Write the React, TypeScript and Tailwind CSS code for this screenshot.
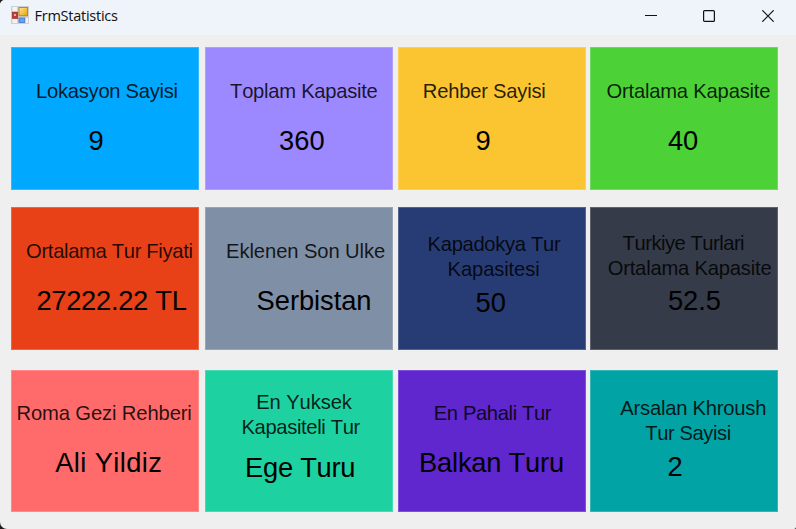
type Line = { text: string; cls: string };
type Stat = { card: string; lines: Line[]; value: Line };

const rows: { cls: string; stats: Stat[] }[] = [
  {
    cls: "mt-3 h-[143px]",
    stats: [
      {
        card: "bg-[#00a8ff] pt-[32px]",
        lines: [{ text: "Lokasyon Sayisi", cls: "ml-[24.5px] tracking-[-0.28px]" }],
        value: { text: "9", cls: "mt-[22px] ml-[77px]" },
      },
      {
        card: "ml-[6px] bg-[#9c88ff] pt-[32px]",
        lines: [{ text: "Toplam Kapasite", cls: "ml-[24.5px] tracking-[-0.27px]" }],
        value: { text: "360", cls: "mt-[22px] ml-[73.5px]" },
      },
      {
        card: "ml-[4.5px] bg-[#fbc531] pt-[32px]",
        lines: [{ text: "Rehber Sayisi", cls: "ml-[24.7px] tracking-[-0.22px]" }],
        value: { text: "9", cls: "mt-[22px] ml-[77.3px]" },
      },
      {
        card: "ml-[4.5px] bg-[#4cd137] pt-[32px]",
        lines: [{ text: "Ortalama Kapasite", cls: "ml-[15.9px] tracking-[-0.2px]" }],
        value: { text: "40", cls: "mt-[22px] ml-[77.3px]" },
      },
    ],
  },
  {
    cls: "mt-[17px] h-[143px]",
    stats: [
      {
        card: "bg-[#e84118] pt-[32px]",
        lines: [{ text: "Ortalama Tur Fiyati", cls: "ml-[14.5px] tracking-[-0.33px]" }],
        value: { text: "27222.22 TL", cls: "mt-[22px] ml-[24.8px] tracking-[-0.28px]" },
      },
      {
        card: "ml-[6px] bg-[#7f8fa6] pt-[32px]",
        lines: [{ text: "Eklenen Son Ulke", cls: "ml-[20.5px] tracking-[-0.09px]" }],
        value: { text: "Serbistan", cls: "mt-[22px] ml-[51px] tracking-[-0.05px]" },
      },
      {
        card: "ml-[4.5px] bg-[#273c75] pt-[25px]",
        lines: [
          { text: "Kapadokya Tur", cls: "ml-[29.5px] tracking-[-0.32px]" },
          { text: "Kapasitesi", cls: "ml-[49.5px] tracking-[-0.12px]" },
        ],
        value: { text: "50", cls: "mt-[6px] ml-[77.5px]" },
      },
      {
        card: "ml-[4.5px] bg-[#353b48] pt-[24px]",
        lines: [
          { text: "Turkiye Turlari", cls: "ml-[32px] tracking-[-0.5px]" },
          { text: "Ortalama Kapasite", cls: "ml-[17.1px] tracking-[-0.2px]" },
        ],
        value: { text: "52.5", cls: "mt-[5px] ml-[77.4px] tracking-[-0.1px]" },
      },
    ],
  },
  {
    cls: "mt-5 h-[142px]",
    stats: [
      {
        card: "bg-[#ff6b6b] pt-[31px]",
        lines: [{ text: "Roma Gezi Rehberi", cls: "ml-[4.9px] tracking-[-0.12px]" }],
        value: { text: "Ali Yildiz", cls: "mt-[22px] ml-[43.7px] tracking-[0.38px]" },
      },
      {
        card: "ml-[6px] bg-[#1dd1a1] pt-[20px]",
        lines: [
          { text: "En Yuksek", cls: "ml-[50.6px] tracking-[-0.1px]" },
          { text: "Kapasiteli Tur", cls: "ml-[35.8px] tracking-[-0.35px]" },
        ],
        value: { text: "Ege Turu", cls: "mt-[13px] ml-[39.5px] tracking-[-0.26px]" },
      },
      {
        card: "ml-[4.5px] bg-[#5f27cd] pt-[31px]",
        lines: [{ text: "En Pahali Tur", cls: "ml-[35.7px] tracking-[-0.38px]" }],
        value: { text: "Balkan Turu", cls: "mt-[22px] ml-[21px] tracking-[-0.22px]" },
      },
      {
        card: "ml-[4.5px] bg-[#01a3a4] pt-[26px]",
        lines: [
          { text: "Arsalan Khroush", cls: "ml-[29.7px] tracking-[-0.22px]" },
          { text: "Tur Sayisi", cls: "ml-[54.7px] tracking-[-0.43px]" },
        ],
        value: { text: "2", cls: "mt-[6px] ml-[77px]" },
      },
    ],
  },
];

function StatCard({ stat }: { stat: Stat }) {
  return (
    <div
      className={`flex w-[188px] shrink-0 flex-col items-start pl-[0.6px] whitespace-nowrap text-black shadow-[inset_0_0_0_1px_rgba(255,255,255,0.2)] ${stat.card}`}
    >
      {stat.lines.map((line) => (
        <span key={line.text} className={`h-[25px] text-[20.2px] leading-[25px] text-black/85 ${line.cls}`}>
          {line.text}
        </span>
      ))}
      <span className={`h-[30px] text-[27.3px] leading-[30px] ${stat.value.cls}`}>{stat.value.text}</span>
    </div>
  );
}

function FormIcon() {
  return (
    <svg width="18" height="18" viewBox="0 0 18 18" aria-hidden="true">
      <defs>
        <linearGradient id="gold" x1="0" y1="0" x2="1" y2="1">
          <stop offset="0" stopColor="#ffe69a" />
          <stop offset="1" stopColor="#e3a400" />
        </linearGradient>
      </defs>
      <rect width="18" height="18" fill="#cfcfd1" />
      <rect x="1.5" y="1" width="4.5" height="4" fill="#f4f4f6" />
      <rect x="1.5" y="13" width="4.5" height="4" fill="#f4f4f6" />
      <rect x="14.5" y="12" width="2.5" height="5" fill="#f4f4f6" />
      <rect x="1.3" y="6.3" width="5.4" height="6" fill="#c03b35" stroke="#a32420" strokeWidth=".7" />
      <rect x="3" y="8" width="2" height="2" fill="#efaaa4" />
      <rect x="8" y="1.5" width="8.5" height="8.2" fill="url(#gold)" stroke="#bb8b19" />
      <rect x="8" y="12" width="5.8" height="4.5" fill="#65a0ef" stroke="#4478cf" strokeWidth=".8" />
    </svg>
  );
}

export default function App() {
  return (
    <div className="h-[529px] w-[796px] overflow-hidden bg-[#1c1c1c] font-['Liberation_Sans',Arial,sans-serif] [font-kerning:none]">
      <div className="flex h-[529px] flex-col overflow-hidden rounded-tl-[5px] rounded-br-[2px] rounded-bl-[7px] bg-[#efefef]">
        <header className="flex h-[35px] shrink-0 items-center bg-[#eff3fa] pl-[11px]">
          <div className="mt-[-5px]">
            <FormIcon />
          </div>
          <h1 className="mt-[-4px] ml-[5.5px] font-['Open_Sans','Noto_Sans',sans-serif] text-[14.5px] leading-5 tracking-[-0.25px] text-[#111]">
            FrmStatistics
          </h1>
          <div className="mt-[-3px] mr-[22px] ml-auto flex">
            <svg className="mr-[46px]" width="12" height="12" viewBox="0 0 12 12" fill="none" stroke="#111">
              <path d="M0 5.5h12" />
            </svg>
            <svg className="mr-[47px]" width="12" height="12" viewBox="0 0 12 12" fill="none" stroke="#111" strokeWidth="1.2">
              <rect x=".6" y=".6" width="10.8" height="10.8" rx="1" />
            </svg>
            <svg width="12" height="12" viewBox="0 0 12 12" fill="none" stroke="#111" strokeWidth="1.2">
              <path d="M.3.3l11.4 11.4M11.7.3L.3 11.7" />
            </svg>
          </div>
        </header>
        <main className="pl-[11px]">
          {rows.map((row) => (
            <section key={row.cls} className={`flex ${row.cls}`}>
              {row.stats.map((stat) => (
                <StatCard key={stat.lines[0].text} stat={stat} />
              ))}
            </section>
          ))}
        </main>
      </div>
    </div>
  );
}
